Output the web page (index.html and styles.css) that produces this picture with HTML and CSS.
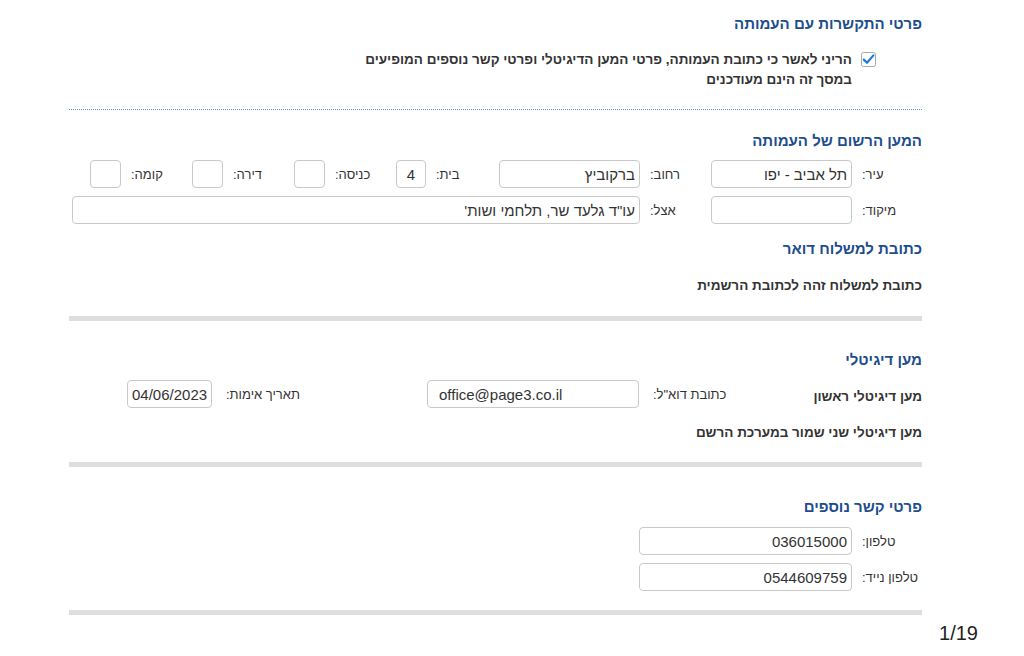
FILE: index.html
```html
<!DOCTYPE html>
<html lang="he" dir="rtl">
<head>
  <meta charset="UTF-8" />
  <meta name="viewport" content="width=device-width, initial-scale=1.0"/>
  <title>פרטי התקשרות עם העמותה</title>
  <link rel="stylesheet" href="styles.css">
</head>
<body>
  <div class="page">
    <!-- אישור פרטי התקשרות -->
    <section class="contact">
      <h2>פרטי התקשרות עם העמותה</h2>
      <div class="confirm">
        <svg class="check" width="15" height="15" viewBox="0 0 15 15">
          <rect x="0.5" y="0.5" width="14" height="14" rx="2" fill="#fff" stroke="#a9a9a9"/>
          <path d="M2.8 7.6 L6 10.8 L12.4 3.4" fill="none" stroke="#1f7ae0" stroke-width="2.2" stroke-linecap="round" stroke-linejoin="round"/>
        </svg>
        <p>הריני לאשר כי כתובת העמותה, פרטי המען הדיגיטלי ופרטי קשר נוספים המופיעים במסך זה הינם מעודכנים</p>
      </div>
    </section>

    <!-- מען רשום -->
    <section class="address">
      <h2>המען הרשום של העמותה</h2>
      <div class="addr-grid">
        <label>עיר:</label>
        <input type="text" value="תל אביב - יפו">
        <label>רחוב:</label>
        <input type="text" value="ברקוביץ">
        <label>בית:</label>
        <input type="text" class="small" value="4">
        <label>כניסה:</label>
        <input type="text" class="small" value="">
        <label>דירה:</label>
        <input type="text" class="small" value="">
        <label>קומה:</label>
        <input type="text" class="small" value="">

        <label class="row-start">מיקוד:</label>
        <input type="text" value="">
        <label>אצל:</label>
        <input type="text" class="wide" value="עו&quot;ד גלעד שר, תלחמי ושות'">
      </div>

      <h2 class="sub">כתובת למשלוח דואר</h2>
      <p class="note">כתובת למשלוח זהה לכתובת הרשמית</p>
    </section>

    <hr class="bar">

    <!-- מען דיגיטלי -->
    <section class="digital">
      <h2>מען דיגיטלי</h2>
      <div class="dg-row">
        <span class="dg-title">מען דיגיטלי ראשון</span>
        <label class="dg-label">כתובת דוא"ל:</label>
        <input type="text" class="email" value="office@page3.co.il">
        <label class="dg-label date-label">תאריך אימות:</label>
        <input type="text" class="date" value="04/06/2023">
      </div>
      <p class="note">מען דיגיטלי שני שמור במערכת הרשם</p>
    </section>

    <hr class="bar">

    <!-- פרטי קשר נוספים -->
    <section class="more">
      <h2>פרטי קשר נוספים</h2>
      <div class="phone-grid">
        <label>טלפון:</label>
        <input type="text" value="036015000">
        <label>טלפון נייד:</label>
        <input type="text" value="0544609759">
      </div>
    </section>

    <hr class="bar">
  </div>

  <div class="page-num">1/19</div>
</body>
</html>
```

FILE: styles.css
```css
* {
  box-sizing: border-box;
  margin: 0;
  padding: 0;
}
body {
  font-family: 'Liberation Sans', Arial, sans-serif;
  background: #fff;
  color: #333;
  font-size: 13px;
}

.page {
  margin: 0 102px 0 69px;
  padding-top: 14px;
}

h2 {
  font-size: 15px;
  line-height: 20px;
  color: #1d4d8c;
  font-weight: bold;
}

/* checkbox confirmation, closed by a blue dotted rule */
.contact {
  padding-bottom: 20px;
  background-image: repeating-linear-gradient(to right, #5b93dc 0 1px, transparent 1px 2px);
  background-size: 100% 1px;
  background-position: bottom;
  background-repeat: no-repeat;
}
.confirm {
  display: flex;
  align-items: flex-start;
  margin-top: 16px;
  padding-right: 46px;
}
.confirm .check {
  flex: none;
  margin-top: 2px;
  margin-left: 9px;
}
.confirm p {
  width: 500px;
  font-weight: bold;
  font-size: 13.5px;
  line-height: 20px;
}

/* registered address */
.address {
  padding-top: 21px;
}
.addr-grid {
  display: grid;
  grid-template-columns: 70px 141px 71px 141px 73px 30px 71px 31px 71px 31px 71px 31px 1fr;
  row-gap: 8px;
  margin-top: 9px;
  align-items: center;
}
.addr-grid label,
.phone-grid label {
  justify-self: end;
  padding-left: 10px;
}
.addr-grid .row-start {
  grid-column: 1;
}
.addr-grid .wide {
  grid-column: 4 / 13;
  width: auto;
  margin-left: -18px;
}

input {
  height: 28px;
  border: 1px solid #c9c9c9;
  border-radius: 4px;
  font-family: 'Liberation Sans', Arial, sans-serif;
  font-size: 15px;
  color: #333;
  padding: 0 4px;
  background: #fff;
  width: 100%;
}
input.small {
  text-align: center;
  padding: 0;
}

.sub {
  margin-top: 15px;
}
.note {
  font-weight: bold;
  font-size: 13.5px;
  line-height: 20px;
  margin-top: 17px;
}

.bar {
  border: none;
  height: 5px;
  background: #dedede;
  margin-top: 20px;
}

/* digital address */
.digital {
  padding-top: 29px;
}
.dg-row {
  display: flex;
  align-items: center;
  margin-top: 10px;
}
.dg-title {
  width: 182px;
  font-weight: bold;
  font-size: 13.5px;
  padding-top: 4px;
}
.dg-label {
  width: 101px;
  text-align: left;
  padding-left: 14px;
}
.date-label {
  width: 215px;
  padding-left: 14px;
}
.email {
  width: 212px;
  direction: ltr;
  text-align: left;
  padding-left: 11px;
}
.date {
  width: 85px;
  direction: ltr;
}
.digital .note {
  margin-top: 15px;
}
.digital + .bar {
  margin-top: 19px;
}

/* more contact details */
.more {
  padding-top: 30px;
}
.phone-grid {
  display: grid;
  grid-template-columns: 70px 213px;
  row-gap: 8px;
  margin-top: 10px;
  align-items: center;
}
.more + .bar {
  margin-top: 19px;
}

.page-num {
  position: absolute;
  top: 622px;
  right: 46px;
  font-family: 'Liberation Sans', Arial, sans-serif;
  font-size: 20px;
  color: #222;
  direction: ltr;
}
```
